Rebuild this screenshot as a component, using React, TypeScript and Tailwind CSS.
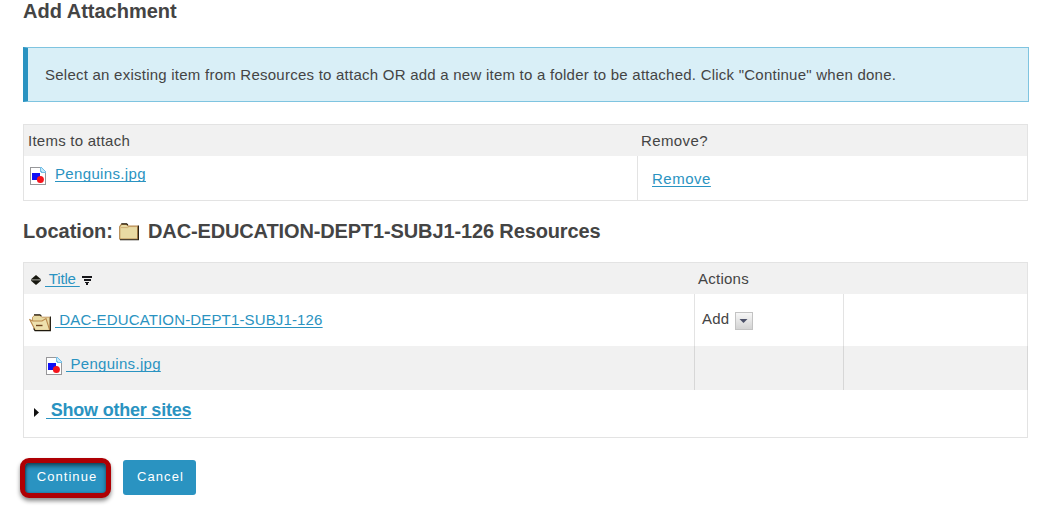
import type { ReactNode } from "react";

const LINK =
  "whitespace-pre text-[#2a93c1] underline decoration-1 underline-offset-2 [text-decoration-skip-ink:none]";

function ImageFileIcon() {
  return (
    <svg width="16" height="18" viewBox="0 0 16 18" className="block shrink-0" shapeRendering="crispEdges">
      <path d="M0 0h11v1H1v16h14V5h1v13H0z" fill="#97979a" />
      <path d="M1 1h10l4 4v12H1z" fill="#fff" />
      <path d="M10 0h2v1h1v1h1v1h1v1h1v2h-5V5h-1z" fill="#75bde4" />
      <path d="M11 1h1v1h1v1h1v1h1v1h-3V4h-1z" fill="#c2e9fa" />
      <rect x="2" y="6" width="8" height="7" fill="#1010f6" />
      <circle cx="10.4" cy="12.4" r="3.5" fill="#f5141c" shapeRendering="auto" />
    </svg>
  );
}

function FolderIcon() {
  return (
    <svg width="20" height="18" viewBox="0 0 20 18" className="block shrink-0">
      <path d="M.7 16V3.6L2.4 1.4h5l2 1.8h9.2V16z" fill="#e8daa3" stroke="#b58a50" strokeWidth="1.2" />
      <path d="M2 4.6h6.6L10 3.6h7.6" fill="none" stroke="#c69c62" strokeWidth=".7" />
      <path d="M2.3.9h5.4l1.2 1.2M19.4 2.4v14.3H1" fill="none" stroke="#1f190d" strokeWidth="1.1" />
    </svg>
  );
}

function OpenFolderIcon() {
  return (
    <svg width="23" height="18" viewBox="0 0 23 18" className="block shrink-0">
      <path d="M3.5 6V3.2L5.5 1.4h5.5l2 1.8h7.7V16H6z" fill="#e8daa3" stroke="#c69c62" />
      <path d="M.8 5.4L4 7h9l4-2.4 3.6 11.2H6z" fill="#eee0ad" />
      <path d="M6 15.8L.8 5.6 4 7h9l4-2.4 3.6 11.2" fill="none" stroke="#b9884c" strokeWidth="1.1" />
      <path d="M7 11.5h6.5" stroke="#70451f" strokeWidth="1.4" />
      <path d="M5 .9h6l1.4 1.2M21.4 2.4v14.2H6L4.6 14.5" fill="none" stroke="#1f190d" strokeWidth="1.1" />
    </svg>
  );
}

function SortIcon() {
  return (
    <svg width="10" height="10" viewBox="0 0 10 10" className="block shrink-0">
      <path d="M5 0l5 4.2v1.6L5 10 0 5.8V4.2z" fill="#17170f" />
      <path d="M0 4h10v1.6H0z" fill="#6f6f68" />
    </svg>
  );
}

function FilterIcon() {
  return (
    <svg width="10" height="9" viewBox="0 0 10 9" className="block shrink-0" shapeRendering="crispEdges">
      <path d="M0 0h10v2H0zM2 3h7v2H2zM3 6h4v1H3zM4 7h2v2H4z" fill="#17171b" />
    </svg>
  );
}

function DropdownIcon() {
  return (
    <svg width="18" height="18" viewBox="0 0 18 18" className="block shrink-0">
      <defs>
        <linearGradient id="dropdown-face" x1="0" y1="0" x2="0" y2="1">
          <stop offset="0" stopColor="#f8f8f8" />
          <stop offset="1" stopColor="#d2d2d2" />
        </linearGradient>
      </defs>
      <rect x=".5" y=".5" width="17" height="17" fill="url(#dropdown-face)" stroke="#c3c3c3" />
      <path d="M4.5 7h8l-4 4z" fill="#4b5068" />
    </svg>
  );
}

function HeaderBar({ children }: { children: ReactNode }) {
  return <div className="flex h-[31px] bg-[#f1f1f1] pt-1.5">{children}</div>;
}

export default function App() {
  return (
    <main className="h-[506px] w-[1039px] overflow-hidden bg-white pr-[10px] pl-[23px] font-['Liberation_Sans',Arial,sans-serif] text-[15px] leading-5 tracking-[0.24px] text-[#444]">
      <h1 className="h-[47px] text-[20px] leading-[22px] font-bold tracking-normal">Add Attachment</h1>

      <div className="h-[55px] border border-l-[5px] border-[#7fc4e0] border-l-[#2a93c1] bg-[#d9eff7] pt-[17px] pl-[17px] whitespace-nowrap">
        Select an existing item from Resources to attach OR add a new item to a folder to be attached. Click "Continue" when done.
      </div>

      <section className="mt-[22px] h-[77px] w-[1005px] border border-[#e3e3e3]">
        <HeaderBar>
          <span className="w-[613px] pl-1">Items to attach</span>
          <span className="pl-1 tracking-[0.4px]">Remove?</span>
        </HeaderBar>
        <div className="flex h-11">
          <div className="flex w-[613px] items-start pl-1.5">
            <div className="pt-[11px]"><ImageFileIcon /></div>
            <a href="#" className={`${LINK} mt-2 ml-[9px] tracking-[0.35px]`}>Penguins.jpg</a>
          </div>
          <div className="flex-1 border-l border-[#e3e3e3] pt-[13px] pl-[14px]">
            <a href="#" className={`${LINK} tracking-[0.5px]`}>Remove</a>
          </div>
        </div>
      </section>

      <h2 className="mt-[18px] flex h-[43px] text-[20px] leading-6 font-bold tracking-[-0.13px]">
        <span className="tracking-normal">Location:</span>
        <span className="mt-[4px] mr-[9px] ml-[6px]"><FolderIcon /></span>
        DAC-EDUCATION-DEPT1-SUBJ1-126 Resources
      </h2>

      <section className="h-[176px] w-[1005px] border border-[#e3e3e3]">
        <HeaderBar>
          <div className="flex w-[670px] pl-[7px]">
            <span className="pt-[6px]"><SortIcon /></span>
            <a href="#" className={`${LINK} ml-1 tracking-[-0.15px]`}> Title </a>
            <span className="ml-[2px] pt-[7px]"><FilterIcon /></span>
          </div>
          <span className="pl-1">Actions</span>
        </HeaderBar>
        <div className="flex h-[52px]">
          <div className="flex w-[670px] items-start pl-[5px]">
            <span className="pt-5"><OpenFolderIcon /></span>
            <a href="#" className={`${LINK} mt-4 ml-[3px] tracking-[0.15px]`}> DAC-EDUCATION-DEPT1-SUBJ1-126</a>
          </div>
          <div className="flex w-[149px] border-l border-[#e3e3e3] pt-[15px] pl-[7px]">
            Add
            <span className="mt-[3px] ml-[6px]"><DropdownIcon /></span>
          </div>
          <div className="flex-1 border-l border-[#e3e3e3]" />
        </div>
        <div className="-mr-px flex h-11 border-r border-[#d7d7d7] bg-[#f1f1f1]">
          <div className="flex w-[670px] items-start pl-[22px]">
            <span className="pt-[11px]"><ImageFileIcon /></span>
            <a href="#" className={`${LINK} mt-2 ml-[4px] tracking-[0.3px]`}> Penguins.jpg</a>
          </div>
          <div className="w-[149px] border-l border-[#d7d7d7]" />
          <div className="flex-1 border-l border-[#d7d7d7]" />
        </div>
        <div className="flex pt-[9px] pl-[10px]">
          <svg width="5" height="9" viewBox="0 0 5 9" className="mt-[9px] mr-[7px] block">
            <path d="M0 0l5 4.5L0 9z" fill="#111" />
          </svg>
          <a href="#" className={`${LINK} text-[18px] leading-[22px] font-bold tracking-[-0.22px]`}> Show other sites</a>
        </div>
      </section>

      <div className="-ml-[3px] flex gap-3 pt-5 text-[13px] tracking-[0.9px] text-white">
        <button className="h-10 w-[91px] rounded-[9px] border-[5px] border-[#ae0004] bg-[#2a93c1] pb-[3px] pl-[3px] leading-none tracking-[1.05px] shadow-[inset_0_3px_4px_rgba(0,0,0,0.5),inset_1px_0_2px_rgba(0,0,0,0.3),0_3px_4px_rgba(0,0,0,0.45)]">
          Continue
        </button>
        <button className="mt-0.5 h-[35px] w-[73px] rounded-[3px] bg-[#2a93c1] pb-[2px] pl-[2px] leading-none tracking-[1.05px]">
          Cancel
        </button>
      </div>
    </main>
  );
}
